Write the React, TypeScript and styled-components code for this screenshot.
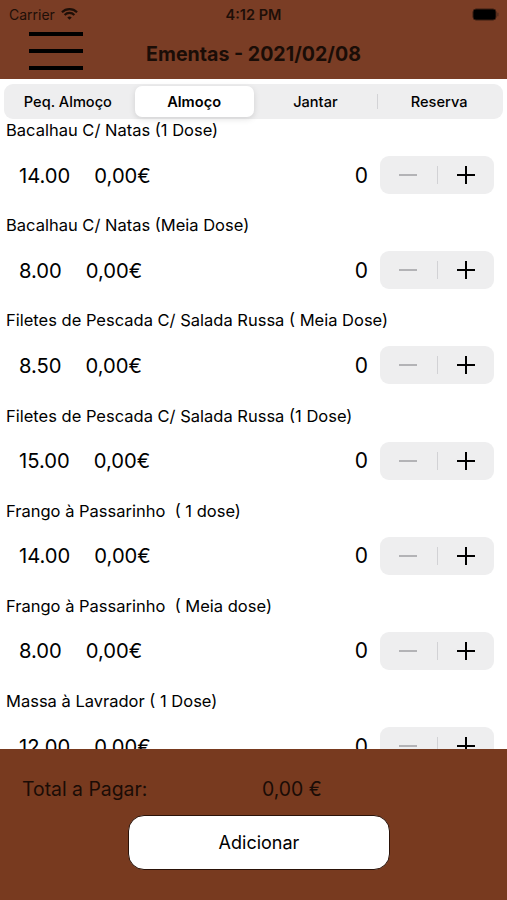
import React from "react";
import styled, { createGlobalStyle } from "styled-components";

const Global = createGlobalStyle`
  html, body { margin: 0; padding: 0; background: #ffffff; }
  body { font-family: Inter, "Noto Sans", "Liberation Sans", sans-serif; }
  * { box-sizing: border-box; }
`;

const Page = styled.div`
  width: 507px;
  height: 900px;
  display: flex;
  flex-direction: column;
  overflow: hidden;
  background: #ffffff;
  color: #000;
`;

const Header = styled.header`
  background: #7a3d25;
  height: 79px;
  display: flex;
  flex-direction: column;
`;

const StatusBar = styled.div`
  height: 28px;
  display: grid;
  grid-template-columns: 1fr auto 1fr;
  align-items: center;
  padding: 0 9px;
  font-size: 14px;
  color: #1e0f08;
`;

const StatusLeft = styled.div`
  display: flex;
  align-items: center;
  gap: 6px;
`;

const StatusTime = styled.div`
  font-weight: 600;
  font-size: 14.5px;
`;

const StatusRight = styled.div`
  display: flex;
  justify-content: flex-end;
  margin-right: -2px;
`;

const NavBar = styled.div`
  flex: 1;
  display: grid;
  grid-template-columns: 1fr auto 1fr;
  align-items: center;
`;

const Hamburger = styled.button`
  margin-left: 29px;
  margin-top: -5px;
  width: 54px;
  height: 38px;
  padding: 0;
  border: none;
  background: transparent;
  display: flex;
  flex-direction: column;
  justify-content: space-between;
`;

const Bar = styled.span`
  display: block;
  height: 4px;
  width: 100%;
  background: #000;
`;

const Title = styled.h1`
  margin: 0;
  font-size: 19.6px;
  font-weight: 700;
  color: #1a0d07;
`;

const Segmented = styled.div`
  margin: 5px 4px 0;
  height: 35px;
  background: #eeeeef;
  border-radius: 9px;
  padding: 2px;
  display: grid;
  grid-template-columns: repeat(4, 1fr);
`;

const Segment = styled.div<{ $active?: boolean; $sep?: boolean }>`
  position: relative;
  display: flex;
  align-items: center;
  justify-content: center;
  font-size: 14.6px;
  font-weight: ${(p) => (p.$active ? 600 : 500)};
  border-radius: 7px;
  background: ${(p) => (p.$active ? "#ffffff" : "transparent")};
  box-shadow: ${(p) => (p.$active ? "0 2px 6px rgba(0,0,0,0.12)" : "none")};
  margin: ${(p) => (p.$active ? "0 0 0 5px" : "0")};
  &::before {
    content: "";
    display: ${(p) => (p.$sep ? "block" : "none")};
    position: absolute;
    left: 0;
    top: 8px;
    bottom: 8px;
    width: 1px;
    background: #d3d3d6;
  }
`;

const List = styled.div`
  flex: 1;
  overflow: hidden;
`;

const Item = styled.div`
  height: 95.2px;
  display: flex;
  flex-direction: column;
`;

const ItemName = styled.div`
  height: 22px;
  line-height: 22px;
  padding-left: 6px;
  font-size: 16.5px;
  white-space: pre;
`;

const ItemLine = styled.div`
  margin-top: 15px;
  height: 38px;
  display: flex;
  align-items: center;
  padding: 0 13px 0 19px;
  font-size: 20.2px;
`;

const Price = styled.span`
  margin-right: 24px;
`;

const Spacer = styled.span`
  flex: 1;
`;

const Qty = styled.span`
  margin-right: 12px;
  font-size: 21px;
`;

const Stepper = styled.div`
  width: 114px;
  height: 38px;
  background: #eeeeef;
  border-radius: 9px;
  display: grid;
  grid-template-columns: 1fr 1px 1fr;
  align-items: center;
`;

const StepDivider = styled.span`
  height: 18px;
  background: #d2d2d5;
`;

const StepButton = styled.span<{ $disabled?: boolean }>`
  display: flex;
  justify-content: center;
  align-items: center;
  color: ${(p) => (p.$disabled ? "#b3b3b6" : "#000")};
`;

const Footer = styled.footer`
  height: 151px;
  background: #783a1f;
  display: flex;
  flex-direction: column;
  padding-top: 28px;
`;

const TotalRow = styled.div`
  display: flex;
  align-items: center;
  padding-left: 22px;
  font-size: 19.4px;
  color: #1a0c06;
  height: 24px;
`;

const TotalLabel = styled.span`
  width: 240px;
`;

const AddButton = styled.button`
  margin: 14px 0 0 128px;
  width: 262px;
  height: 55px;
  background: #ffffff;
  border: 1.5px solid #2a1208;
  border-radius: 16px;
  font-family: inherit;
  font-size: 18px;
  color: #000;
`;

const Wifi = () => (
  <svg width="17" height="13" viewBox="0 0 16 12">
    <path d="M0.9 3.9 A10 10 0 0 1 15.1 3.9" fill="none" stroke="#1e0f08" strokeWidth="2" />
    <path d="M3.4 6.4 A6.5 6.5 0 0 1 12.6 6.4" fill="none" stroke="#1e0f08" strokeWidth="2" />
    <path d="M8 11 L5.9 8.9 A3 3 0 0 1 10.1 8.9 Z" fill="#1e0f08" />
  </svg>
);

const Battery = () => (
  <svg width="28" height="13" viewBox="0 0 28 13">
    <rect x="1" y="1" width="23" height="11" rx="3" fill="#000" stroke="#3a1e12" strokeWidth="1" />
    <rect x="25" y="4.5" width="1.6" height="4" rx="0.8" fill="#5a3020" />
  </svg>
);

const Minus = () => (
  <svg width="20" height="20" viewBox="0 0 20 20">
    <line x1="1" y1="10" x2="19" y2="10" stroke="currentColor" strokeWidth="2" />
  </svg>
);

const Plus = () => (
  <svg width="20" height="20" viewBox="0 0 20 20">
    <line x1="1" y1="10" x2="19" y2="10" stroke="currentColor" strokeWidth="2" />
    <line x1="10" y1="1" x2="10" y2="19" stroke="currentColor" strokeWidth="2" />
  </svg>
);

const items = [
  { name: "Bacalhau C/ Natas (1 Dose)", price: "14.00" },
  { name: "Bacalhau C/ Natas (Meia Dose)", price: "8.00" },
  { name: "Filetes de Pescada C/ Salada Russa ( Meia Dose)", price: "8.50" },
  { name: "Filetes de Pescada C/ Salada Russa (1 Dose)", price: "15.00" },
  { name: "Frango à Passarinho  ( 1 dose)", price: "14.00" },
  { name: "Frango à Passarinho  ( Meia dose)", price: "8.00" },
  { name: "Massa à Lavrador ( 1 Dose)", price: "12.00" },
];

export default function App() {
  return (
    <Page>
      <Global />
      <Header>
        <StatusBar>
          <StatusLeft>
            <span>Carrier</span>
            <Wifi />
          </StatusLeft>
          <StatusTime>4:12 PM</StatusTime>
          <StatusRight>
            <Battery />
          </StatusRight>
        </StatusBar>
        <NavBar>
          <div>
            <Hamburger aria-label="menu">
              <Bar />
              <Bar />
              <Bar />
            </Hamburger>
          </div>
          <Title>Ementas - 2021/02/08</Title>
          <div />
        </NavBar>
      </Header>
      <Segmented>
        <Segment>Peq. Almoço</Segment>
        <Segment $active>Almoço</Segment>
        <Segment>Jantar</Segment>
        <Segment $sep>Reserva</Segment>
      </Segmented>
      <List>
        {items.map((it, i) => (
          <Item key={i}>
            <ItemName>{it.name}</ItemName>
            <ItemLine>
              <Price>{it.price}</Price>
              <span>0,00€</span>
              <Spacer />
              <Qty>0</Qty>
              <Stepper>
                <StepButton $disabled>
                  <Minus />
                </StepButton>
                <StepDivider />
                <StepButton>
                  <Plus />
                </StepButton>
              </Stepper>
            </ItemLine>
          </Item>
        ))}
      </List>
      <Footer>
        <TotalRow>
          <TotalLabel>Total a Pagar:</TotalLabel>
          <span>0,00 €</span>
        </TotalRow>
        <AddButton>Adicionar</AddButton>
      </Footer>
    </Page>
  );
}
